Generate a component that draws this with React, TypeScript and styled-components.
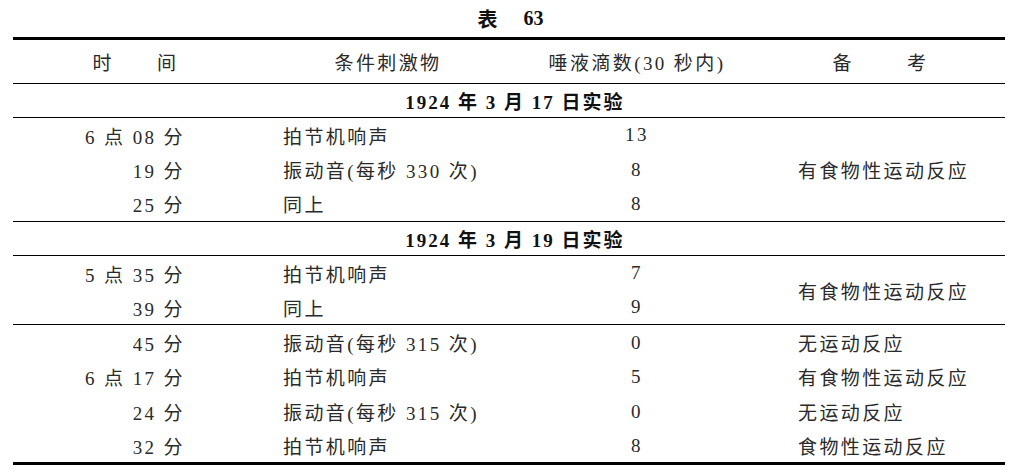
import styled, { createGlobalStyle } from 'styled-components'

const GlobalStyle = createGlobalStyle`
  html, body {
    margin: 0;
    padding: 0;
    background: #fff;
  }
  body {
    font-family: 'Liberation Serif', 'Noto Sans CJK SC', serif;
    color: #2a2a2a;
  }
`

const Page = styled.div`
  width: 1032px;
  height: 475px;
  padding: 0 27px 0 13px;
  box-sizing: border-box;
`

const Caption = styled.div`
  height: 37px;
  display: flex;
  align-items: center;
  justify-content: center;
  gap: 26px;
  padding-left: 3px;
  font-size: 20px;
  font-weight: 700;
  color: #111;
`

const Table = styled.table`
  width: 992px;
  border-collapse: collapse;
  table-layout: fixed;
  border-top: 3px solid #000;
  border-bottom: 3px solid #000;
  font-size: 19px;
  letter-spacing: 2.4px;
`

const HeadCell = styled.th<{ $spread?: number }>`
  height: 43px;
  padding: 0;
  font-weight: 400;
  text-align: center;
  word-spacing: ${p => p.$spread ?? 0}px;
  border-bottom: 1px solid #000;
`

const GroupCell = styled.td`
  height: 33px;
  padding: 0 0 0 12px;
  text-align: center;
  font-weight: 700;
  color: #111;
  letter-spacing: 2px;
  border-bottom: 1px solid #000;
`

const Row = styled.tr<{ $ruled?: boolean }>`
  height: 34.7px;
  border-bottom: ${p => (p.$ruled ? '1px solid #000' : 'none')};
`

const TimeCell = styled.td`
  padding: 0 73px 0 0;
  text-align: right;
`

const StimCell = styled.td`
  padding: 0 0 0 25px;
  text-align: left;
`

const DropCell = styled.td`
  padding: 0;
  text-align: center;
`

const NoteCell = styled.td`
  padding: 0 0 0 42px;
  text-align: left;
`

type Entry = { time: string; stim: string; drops: string; note?: string; span?: number; ruled?: boolean }

const groups: { title: string; rows: Entry[] }[] = [
  {
    title: '1924 年 3 月 17 日实验',
    rows: [
      { time: '6 点 08 分', stim: '拍节机响声', drops: '13', note: '有食物性运动反应', span: 3 },
      { time: '19 分', stim: '振动音(每秒 330 次)', drops: '8' },
      { time: '25 分', stim: '同上', drops: '8', ruled: true },
    ],
  },
  {
    title: '1924 年 3 月 19 日实验',
    rows: [
      { time: '5 点 35 分', stim: '拍节机响声', drops: '7', note: '有食物性运动反应', span: 2 },
      { time: '39 分', stim: '同上', drops: '9', ruled: true },
      { time: '45 分', stim: '振动音(每秒 315 次)', drops: '0', note: '无运动反应', span: 1 },
      { time: '6 点 17 分', stim: '拍节机响声', drops: '5', note: '有食物性运动反应', span: 1 },
      { time: '24 分', stim: '振动音(每秒 315 次)', drops: '0', note: '无运动反应', span: 1 },
      { time: '32 分', stim: '拍节机响声', drops: '8', note: '食物性运动反应', span: 1 },
    ],
  },
]

export default function App() {
  return (
    <Page>
      <GlobalStyle />
      <Caption>
        <span>表</span>
        <span>63</span>
      </Caption>
      <Table>
        <colgroup>
          <col style={{ width: 245 }} />
          <col style={{ width: 260 }} />
          <col style={{ width: 238 }} />
          <col style={{ width: 249 }} />
        </colgroup>
        <thead>
          <tr>
            <HeadCell $spread={36}>时 间</HeadCell>
            <HeadCell>条件刺激物</HeadCell>
            <HeadCell>唾液滴数(30 秒内)</HeadCell>
            <HeadCell $spread={46}>备 考</HeadCell>
          </tr>
        </thead>
        <tbody>
          {groups.map(g => (
            <>
              <tr key={g.title}>
                <GroupCell colSpan={4}>{g.title}</GroupCell>
              </tr>
              {g.rows.map((r, i) => (
                <Row key={g.title + i} $ruled={r.ruled}>
                  <TimeCell>{r.time}</TimeCell>
                  <StimCell>{r.stim}</StimCell>
                  <DropCell>{r.drops}</DropCell>
                  {r.span && <NoteCell rowSpan={r.span}>{r.note}</NoteCell>}
                </Row>
              ))}
            </>
          ))}
        </tbody>
      </Table>
    </Page>
  )
}
